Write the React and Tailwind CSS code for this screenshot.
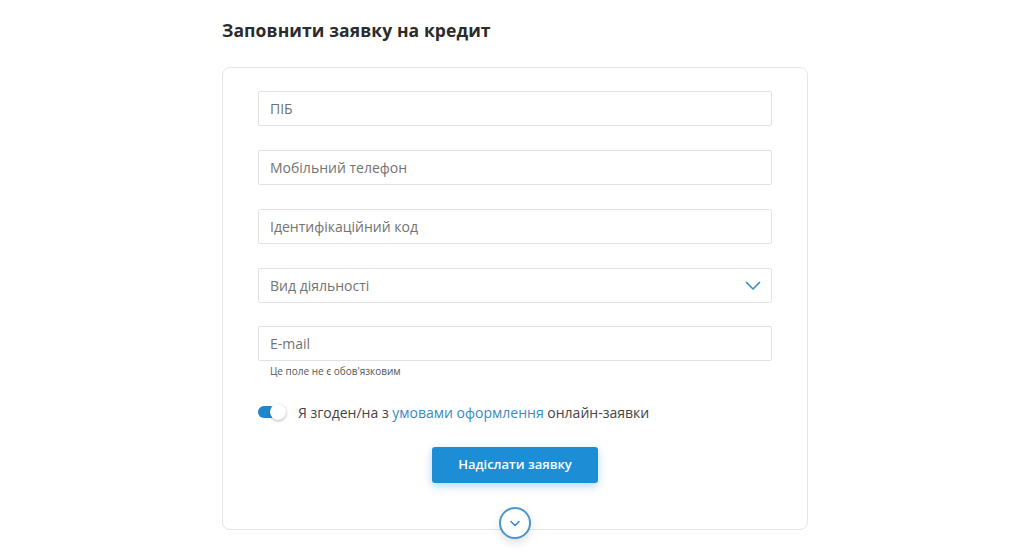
import React, { useState } from "react";

const fields = ["ПІБ", "Мобільний телефон", "Ідентифікаційний код"];

export default function App() {
  const [on, setOn] = useState(true);
  return (
    <div className="w-[1034px] h-[556px] bg-white overflow-hidden" style={{ fontFamily: '"Open Sans", "Noto Sans", sans-serif' }}>
      <div className="w-[586px] ml-[222px] pt-[18px]">
        <h1 className="text-[17.5px] leading-[24px] font-bold text-[#2b2b2b] tracking-[0.1px]">Заповнити заявку на кредит</h1>
        <div className="relative mt-[25px] border border-[#e4e4e4] rounded-[8px] px-[35px] pt-[23px] pb-[45px] h-[463px]">
          <div className="flex flex-col gap-[24px]">
            {fields.map((f) => (
              <div key={f} className="h-[35px] border border-[#e2e2e2] rounded-[2px] flex items-center px-[11px] text-[14px] text-[#727272]">
                {f}
              </div>
            ))}
            <div className="h-[35px] border border-[#e2e2e2] rounded-[2px] flex items-center justify-between pl-[11px] pr-[10px] text-[14px] text-[#727272]">
              <span>Вид діяльності</span>
              <svg width="16" height="10" viewBox="0 0 16 10" fill="none">
                <path d="M1.5 1.5 L8 8 L14.5 1.5" stroke="#3a8fc8" strokeWidth="1.7" strokeLinecap="round" strokeLinejoin="round" />
              </svg>
            </div>
            <div className="-mt-[1px]">
              <div className="h-[35px] border border-[#e2e2e2] rounded-[2px] flex items-center px-[11px] text-[14px] text-[#727272]">E-mail</div>
              <div className="mt-[3px] pl-[12px] text-[10px] leading-[14px] text-[#555]">Це поле не є обов'язковим</div>
            </div>
          </div>
          <div className="flex items-center mt-[24px] h-[20px]">
            <button onClick={() => setOn(!on)} className="relative w-[27px] h-[12px] rounded-full bg-[#1e86cf] shrink-0">
              <span className="absolute right-[-1px] top-[-2px] w-[16px] h-[16px] rounded-full bg-white shadow-[0_1px_3px_rgba(0,0,0,0.3)]" />
            </button>
            <span className="ml-[13px] text-[14px] text-[#444]">
              Я згоден/на з <span className="text-[#3a8ac4]">умовами оформлення</span> онлайн-заявки
            </span>
          </div>
          <div className="flex justify-center mt-[25px]">
            <button className="w-[166px] h-[36px] rounded-[3px] bg-[#1d8ed6] text-white text-[13px] font-semibold shadow-[0_3px_8px_rgba(30,142,214,0.35)]">
              Надіслати заявку
            </button>
          </div>
          <div className="absolute left-1/2 -translate-x-1/2 bottom-[-10px] w-[32px] h-[32px] rounded-full border-[2px] border-[#4a95cc] bg-white flex items-center justify-center shadow-[0_4px_10px_rgba(0,0,0,0.12)]">
            <svg width="10" height="7" viewBox="0 0 10 7" fill="none">
              <path d="M1 1.5 L5 5.5 L9 1.5" stroke="#3d87c0" strokeWidth="1.6" strokeLinecap="round" strokeLinejoin="round" />
            </svg>
          </div>
        </div>
      </div>
    </div>
  );
}
